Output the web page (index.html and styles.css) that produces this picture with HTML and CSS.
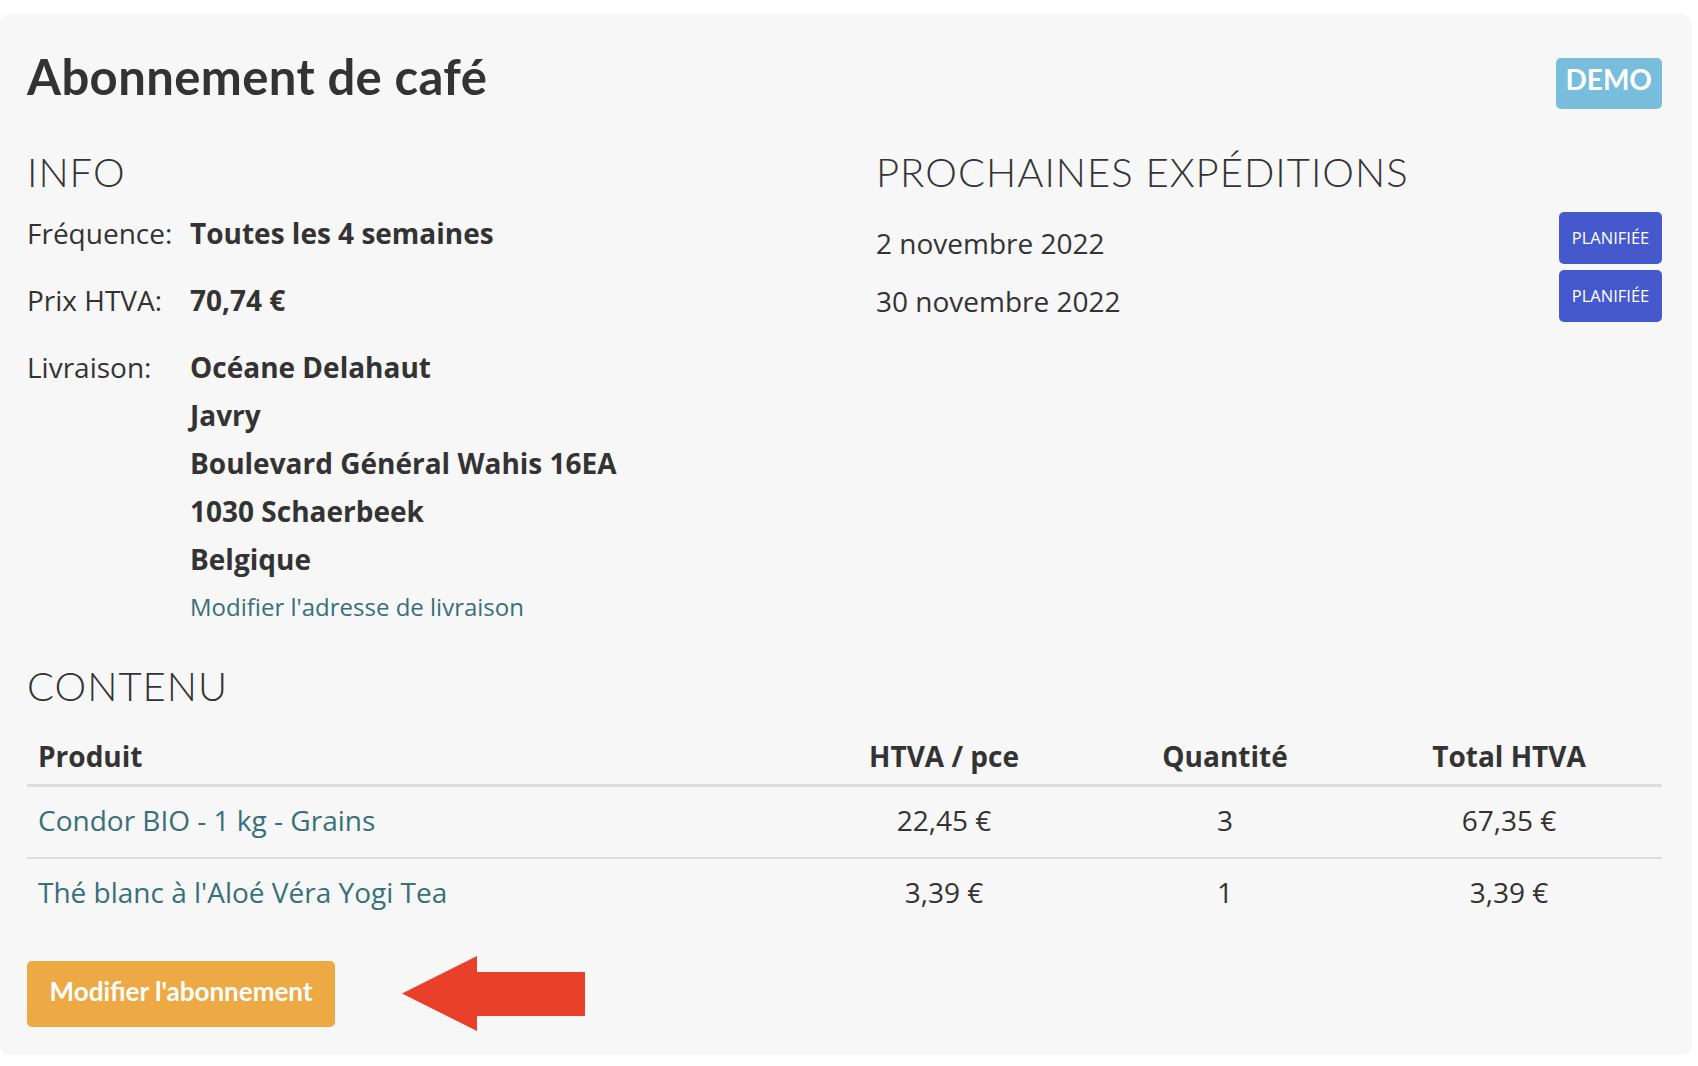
FILE: index.html
```html
<!DOCTYPE html>
<html lang="fr">
<head>
<meta charset="utf-8">
<title>Abonnement de café</title>
<link rel="stylesheet" href="styles.css">
</head>
<body>
<div class="page">
  <div class="card">
    <header class="card-head">
      <h1 class="title">Abonnement de café</h1>
      <span class="badge-demo">DEMO</span>
    </header>

    <div class="two-col">
      <section class="info">
        <h2 class="section-title">INFO</h2>
        <dl class="info-list">
          <dt>Fréquence:</dt>
          <dd><strong>Toutes les 4 semaines</strong></dd>
          <dt>Prix HTVA:</dt>
          <dd><strong>70,74 €</strong></dd>
          <dt>Livraison:</dt>
          <dd>
            <strong class="address">Océane Delahaut<br>Javry<br>Boulevard Général Wahis 16EA<br>1030 Schaerbeek<br>Belgique</strong>
            <a class="link-small" href="#">Modifier l'adresse de livraison</a>
          </dd>
        </dl>
      </section>

      <section class="shipments">
        <h2 class="section-title">PROCHAINES EXPÉDITIONS</h2>
        <ul class="ship-list">
          <li class="ship-row"><span class="ship-date">2 novembre 2022</span><span class="btn-planned">PLANIFIÉE</span></li>
          <li class="ship-row"><span class="ship-date">30 novembre 2022</span><span class="btn-planned">PLANIFIÉE</span></li>
        </ul>
      </section>
    </div>

    <section class="contents">
      <h2 class="section-title">CONTENU</h2>
      <table class="product-table">
        <colgroup>
          <col class="c-prod">
          <col class="c-unit">
          <col class="c-qty">
          <col class="c-total">
        </colgroup>
        <thead>
          <tr>
            <th class="left">Produit</th>
            <th>HTVA / pce</th>
            <th>Quantité</th>
            <th>Total HTVA</th>
          </tr>
        </thead>
        <tbody>
          <tr>
            <td class="left"><a href="#">Condor BIO - 1 kg - Grains</a></td>
            <td>22,45 €</td>
            <td>3</td>
            <td>67,35 €</td>
          </tr>
          <tr>
            <td class="left"><a href="#">Thé blanc à l'Aloé Véra Yogi Tea</a></td>
            <td>3,39 €</td>
            <td>1</td>
            <td>3,39 €</td>
          </tr>
        </tbody>
      </table>
    </section>

    <div class="actions">
      <button class="btn-edit" type="button">Modifier l'abonnement</button>
      <svg class="arrow" width="183" height="75" viewBox="0 0 183 75" aria-hidden="true">
        <polygon points="0,37.5 75,0 75,16 183,16 183,60 75,60 75,75" fill="#e94129"/>
      </svg>
    </div>
  </div>
</div>
</body>
</html>
```

FILE: styles.css
```css
* { box-sizing: border-box; }

html, body {
  margin: 0;
  padding: 0;
  background: #ffffff;
}

body {
  font-family: "Open Sans", "Noto Sans", sans-serif;
  color: #333333;
}

.page {
  padding: 14px 6px 11px 0;
}

.card {
  background: #f7f7f7;
  border-radius: 10px;
  padding: 34px 30px 24px 27px;
}

.card-head {
  display: flex;
  justify-content: space-between;
  align-items: flex-start;
}

.title {
  margin: 0;
  font-family: "Lato", "Liberation Sans", sans-serif;
  font-weight: 700;
  font-size: 49px;
  letter-spacing: 0.4px;
  line-height: 56px;
  color: #333333;
}

.badge-demo {
  margin-top: 10px;
  background: #78bedc;
  color: #ffffff;
  font-family: "Lato", "Liberation Sans", sans-serif;
  font-weight: 700;
  font-size: 28px;
  line-height: 43px;
  padding: 0 10px 8px;
  border-radius: 5px;
}

.two-col {
  margin-top: 39px;
  display: grid;
  grid-template-columns: 819px 1fr;
  column-gap: 30px;
}

.section-title {
  margin: 0 0 13px;
  font-family: "Lato", "Liberation Sans", sans-serif;
  font-weight: 300;
  font-size: 40px;
  letter-spacing: 1px;
  line-height: 48px;
  color: #333333;
}

.info-list {
  margin: 0;
  display: grid;
  grid-template-columns: 163px 1fr;
  row-gap: 19px;
  font-size: 28px;
  line-height: 48px;
}

.info-list dt {
  font-weight: 400;
}

.info-list dd {
  margin: 0;
}

.info-list strong {
  font-weight: 700;
}

.address {
  display: block;
}

.link-small {
  display: block;
  font-size: 24px;
  line-height: 48px;
  color: #376f7a;
  text-decoration: none;
}

.ship-list {
  list-style: none;
  margin: 16px 0 0;
  padding: 0;
  display: flex;
  flex-direction: column;
  gap: 6px;
}

.ship-row {
  display: flex;
  justify-content: space-between;
  align-items: flex-start;
}

.ship-date {
  margin-top: 13px;
  font-size: 28px;
  line-height: 36px;
}

.btn-planned {
  background: #4659cc;
  color: #ffffff;
  font-size: 16.5px;
  font-weight: 500;
  line-height: 52px;
  height: 52px;
  width: 103px;
  text-align: center;
  border-radius: 5px;
}

.contents {
  margin-top: 31px;
}

.contents .section-title {
  margin-bottom: 18px;
}

.product-table {
  width: 100%;
  border-collapse: collapse;
  table-layout: fixed;
  font-size: 28px;
  line-height: 36px;
}

.c-prod { width: 767px; }
.c-unit { width: 300px; }
.c-qty { width: 262px; }
.c-total { width: 306px; }

.product-table th {
  font-weight: 700;
  text-align: center;
  padding: 10px 11px;
  border-bottom: 3px solid #dddddd;
}

.product-table td {
  text-align: center;
  padding: 15px 11px 19px;
}

.product-table tbody tr:first-child td {
  border-bottom: 2px solid #dddddd;
}

.product-table .left {
  text-align: left;
}

.product-table a {
  color: #376f7a;
  text-decoration: none;
}

.actions {
  margin-top: 27px;
  display: flex;
  align-items: center;
  gap: 67px;
}

.btn-edit {
  border: none;
  background: #eca944;
  color: #ffffff;
  font-family: "Lato", "Liberation Sans", sans-serif;
  font-weight: 700;
  font-size: 26px;
  line-height: 60px;
  padding: 0 20px 6px;
  height: 66px;
  width: 308px;
  border-radius: 5px;
  cursor: pointer;
}

.arrow {
  display: block;
  flex: none;
}
```
